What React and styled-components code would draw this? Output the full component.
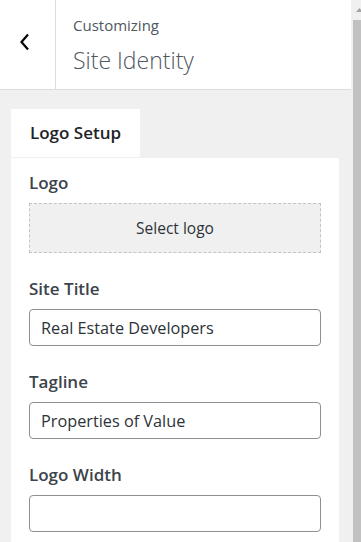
import React from "react";
import styled, { createGlobalStyle } from "styled-components";

const Global = createGlobalStyle`
  html, body { margin: 0; padding: 0; }
  body {
    font-family: "Open Sans", "Noto Sans", sans-serif;
    background: #f0f0f1;
    overflow: hidden;
  }
  * { box-sizing: border-box; }
`;

const Frame = styled.div`
  display: flex;
  width: 361px;
  height: 542px;
  overflow: hidden;
`;

const Main = styled.div`
  flex: 1;
  display: flex;
  flex-direction: column;
  background: #f0f0f1;
  min-width: 0;
`;

const Header = styled.header`
  display: flex;
  height: 90px;
  background: #fff;
  border-bottom: 1px solid #dcdcde;
  flex-shrink: 0;
`;

const BackButton = styled.button`
  width: 56px;
  border: 0;
  border-right: 1px solid #dcdcde;
  background: #fff;
  display: flex;
  align-items: center;
  justify-content: center;
  padding: 0 6px 6px 0;
  cursor: pointer;
`;

const TitleBlock = styled.div`
  display: flex;
  flex-direction: column;
  padding: 15px 0 0 17px;
  color: #50575e;
`;

const Eyebrow = styled.span`
  font-size: 15px;
  line-height: 20px;
`;

const Title = styled.h1`
  margin: 10px 0 0;
  font-size: 23px;
  font-weight: 300;
  line-height: 30px;
`;

const Content = styled.div`
  flex: 1;
  padding: 19px 12px 0 11px;
  display: flex;
  flex-direction: column;
  align-items: flex-start;
`;

const Tab = styled.div`
  background: #fff;
  height: 48px;
  padding: 12px 19px;
  font-size: 17px;
  font-weight: 600;
  line-height: 24px;
  color: #1d2327;
  margin-bottom: 1px;
`;

const Panel = styled.section`
  align-self: stretch;
  flex: 1;
  background: #fff;
  padding: 13px 18px 0;
  display: flex;
  flex-direction: column;
  gap: 24px;
`;

const Field = styled.div`
  display: flex;
  flex-direction: column;
  gap: 8px;
`;

const Label = styled.label`
  font-size: 17px;
  font-weight: 600;
  line-height: 24px;
  color: #3c434a;
`;

const DropZone = styled.button`
  height: 50px;
  background: #f0f0f1;
  border: 1px dashed #c3c4c7;
  font-family: inherit;
  font-size: 15.5px;
  color: #2c3338;
  cursor: pointer;
`;

const Input = styled.input`
  height: 37px;
  border: 1px solid #8c8f94;
  border-radius: 4px;
  padding: 0 11px;
  font-family: inherit;
  font-size: 16.25px;
  color: #2c3338;
  background: #fff;
  outline: none;
`;

const Scrollbar = styled.div`
  width: 10px;
  flex-shrink: 0;
  background: #f0f0f0;
  display: flex;
  flex-direction: column;
  align-items: flex-start;
  overflow: hidden;
`;

const ArrowArea = styled.div`
  height: 20px;
  width: 17px;
  display: flex;
  align-items: center;
  justify-content: center;
`;

const Thumb = styled.div`
  flex: 1;
  width: 13px;
  margin-left: 2px;
  background: #c1c1c1;
`;

function Chevron() {
  return (
    <svg width="12" height="18" viewBox="0 0 12 18" aria-hidden="true">
      <path d="M9 1.5 L2.5 9 L9 16.5" fill="none" stroke="#000" strokeWidth="2.2" />
    </svg>
  );
}

export default function App() {
  return (
    <>
      <Global />
      <Frame>
        <Main>
          <Header>
            <BackButton aria-label="Back">
              <Chevron />
            </BackButton>
            <TitleBlock>
              <Eyebrow>Customizing</Eyebrow>
              <Title>Site Identity</Title>
            </TitleBlock>
          </Header>
          <Content>
            <Tab>Logo Setup</Tab>
            <Panel>
              <Field>
                <Label>Logo</Label>
                <DropZone>Select logo</DropZone>
              </Field>
              <Field>
                <Label>Site Title</Label>
                <Input defaultValue="Real Estate Developers" />
              </Field>
              <Field>
                <Label>Tagline</Label>
                <Input defaultValue="Properties of Value" />
              </Field>
              <Field>
                <Label>Logo Width</Label>
                <Input defaultValue="" />
              </Field>
            </Panel>
          </Content>
        </Main>
        <Scrollbar>
          <ArrowArea>
            <svg width="7" height="4" viewBox="0 0 7 4" aria-hidden="true">
              <path d="M0 4 L3.5 0 L7 4 Z" fill="#a3a3a3" />
            </svg>
          </ArrowArea>
          <Thumb />
        </Scrollbar>
      </Frame>
    </>
  );
}
